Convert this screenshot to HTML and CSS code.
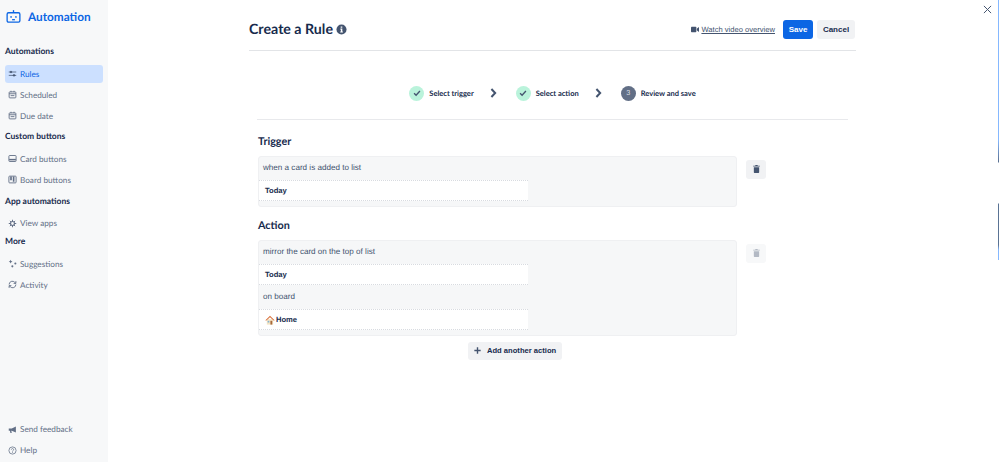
FILE: index.html
```html
<!DOCTYPE html>
<html lang="en">
<head>
    <meta charset="UTF-8">
    <meta name="viewport" content="width=device-width, initial-scale=1.0">
    <title>Create a Rule - Automation</title>
    <link rel="stylesheet" href="styles.css">
</head>
<body>
    <aside class="sidebar">
        <div class="brand">
            <svg class="brand-icon" viewBox="0 0 16 16" fill="none" stroke="#0c66e4" stroke-width="1.4"><rect x="1.2" y="4" width="13.6" height="10" rx="1.5"/><path d="M8 4V1.2"/><circle cx="5.4" cy="8.4" r=".9" fill="#0c66e4" stroke="none"/><circle cx="10.6" cy="8.4" r=".9" fill="#0c66e4" stroke="none"/><path d="M6.5 11.4h3"/></svg>
            <span>Automation</span>
        </div>

        <h2 class="nav-title first">Automations</h2>
        <a class="nav-item active" href="#">
            <svg viewBox="0 0 12 12" fill="none" stroke="currentColor" stroke-width="1"><path d="M1 4h10M1 8.500h10"/><circle cx="4" cy="4" r="1.100" fill="currentColor"/><circle cx="8" cy="8.500" r="1.100" fill="currentColor"/></svg>
            Rules
        </a>
        <a class="nav-item" href="#">
            <svg viewBox="0 0 12 12" fill="none" stroke="currentColor" stroke-width="1.2"><rect x="1.5" y="2.5" width="9" height="8" rx="1"/><path d="M1.5 5h9M4 1v2M8 1v2M3.500 7.500h5"/></svg>
            Scheduled
        </a>
        <a class="nav-item" href="#">
            <svg viewBox="0 0 12 12" fill="none" stroke="currentColor" stroke-width="1.2"><rect x="1.5" y="2.5" width="9" height="8" rx="1"/><path d="M1.5 5h9M4 1v2M8 1v2M3.500 7.500h5"/></svg>
            Due date
        </a>

        <h2 class="nav-title">Custom buttons</h2>
        <a class="nav-item" href="#">
            <svg viewBox="0 0 12 12" fill="none" stroke="currentColor" stroke-width="1.2"><rect x="1.2" y="2" width="9.6" height="8" rx="1"/><path d="M1.5 7.500h9" stroke-width="2"/></svg>
            Card buttons
        </a>
        <a class="nav-item" href="#">
            <svg viewBox="0 0 12 12" fill="none" stroke="currentColor" stroke-width="1.2"><rect x="1.2" y="1.5" width="9.6" height="9" rx="1"/><path d="M4 2v5M7.500 2v7" stroke-width="2.2"/></svg>
            Board buttons
        </a>

        <h2 class="nav-title">App automations</h2>
        <a class="nav-item" href="#">
            <svg viewBox="0 0 12 12" fill="none" stroke="currentColor"><circle cx="6" cy="6" r="2.600" stroke-width="1.5"/><path d="M6 1v2M6 9v2M1 6h2M9 6h2M2.500 2.500l1.400 1.400M8.100 8.100l1.400 1.400M2.500 9.500l1.400-1.400M8.100 3.900l1.400-1.400" stroke-width="1.3"/></svg>
            View apps
        </a>

        <h2 class="nav-title tight">More</h2>
        <a class="nav-item" href="#">
            <svg viewBox="0 0 12 12" fill="currentColor"><path d="M3.500 1l.8 1.700 1.700.8-1.700.8-.8 1.700-.8-1.700L1 3.500l1.700-.8z"/><circle cx="9.800" cy="6" r="1.400"/><circle cx="5.800" cy="9.800" r="1.400"/></svg>
            Suggestions
        </a>
        <a class="nav-item" href="#">
            <svg viewBox="0 0 12 12" fill="none" stroke="currentColor" stroke-width="1.2"><path d="M1.500 6a4.300 4.300 0 0 1 7.600-2.800L10.500 4.500M10.500 1.500v3h-3M10.500 6a4.300 4.300 0 0 1-7.600 2.800L1.500 7.500M1.500 10.500v-3h3"/></svg>
            Activity
        </a>

        <div class="sidebar-bottom">
            <a class="nav-item" href="#">
                <svg viewBox="0 0 12 12" fill="currentColor"><path d="M1 4.500h4L10.500 2v8L5 7.500H4.400L5 10.500H3.200L2.600 7.500H1z"/></svg>
                Send feedback
            </a>
            <a class="nav-item" href="#">
                <svg viewBox="0 0 12 12" fill="none" stroke="currentColor" stroke-width="1"><circle cx="6" cy="6" r="4.800"/><path d="M4.500 4.800a1.500 1.500 0 1 1 2.300 1.300c-.5.300-.8.600-.8 1.200M6 8.200v1"/></svg>
                Help
            </a>
        </div>
    </aside>

    <main class="main">
        <header class="page-header">
            <h1>Create a Rule</h1>
            <svg class="info-icon" viewBox="0 0 12 12"><circle cx="6" cy="6" r="5.500" fill="#44546f"/><path d="M5.100 2.600h1.800v1.500H5.100zM4.800 5h2.100v3.100h.6v1.200H4.600V8.100h.7V6.200h-.5z" fill="#fff"/></svg>
            <a class="video-link" href="#">
                <svg viewBox="0 0 12 10" fill="#44546f"><rect x="0" y="1" width="8" height="8" rx="1"/><path d="M8.600 4l3.400-2.600v7.200L8.600 6z"/></svg>
                <span>Watch video overview</span>
            </a>
            <button class="btn btn-primary">Save</button>
            <button class="btn btn-cancel">Cancel</button>
        </header>

        <div class="content">
            <div class="stepper">
                <div class="step">
                    <span class="step-dot done"><svg viewBox="0 0 12 12" fill="none" stroke="#44546f" stroke-width="1.6"><path d="M2.500 6.200l2.400 2.400 4.600-5"/></svg></span>
                    Select trigger
                </div>
                <svg class="step-arrow" viewBox="0 0 8 12" fill="none" stroke="#44546f" stroke-width="2.4"><path d="M1.500 1.200L6 6l-4.500 4.800"/></svg>
                <div class="step">
                    <span class="step-dot done"><svg viewBox="0 0 12 12" fill="none" stroke="#44546f" stroke-width="1.6"><path d="M2.500 6.200l2.400 2.400 4.600-5"/></svg></span>
                    Select action
                </div>
                <svg class="step-arrow" viewBox="0 0 8 12" fill="none" stroke="#44546f" stroke-width="2.4"><path d="M1.500 1.200L6 6l-4.500 4.800"/></svg>
                <div class="step">
                    <span class="step-dot current">3</span>
                    Review and save
                </div>
            </div>

            <section class="rule-section first">
                <h3>Trigger</h3>
                <div class="rule-row">
                    <div class="rule-box">
                        <p class="rule-text">when a card is added to list</p>
                        <div class="rule-value">Today</div>
                    </div>
                    <button class="trash-btn">
                        <svg viewBox="0 0 10 12" fill="#44546f"><path d="M3.500 0h3l.5 1H10v1.300H0V1h3zM1 3.200h8V11a1 1 0 0 1-1 1H2a1 1 0 0 1-1-1z"/></svg>
                    </button>
                </div>
            </section>

            <section class="rule-section">
                <h3>Action</h3>
                <div class="rule-row">
                    <div class="rule-box">
                        <p class="rule-text">mirror the card on the top of list</p>
                        <div class="rule-value">Today</div>
                        <p class="rule-text">on board</p>
                        <div class="rule-value">
                            <svg class="house" viewBox="0 0 12 12"><rect x="2.200" y="5" width="7.600" height="6.500" fill="#f3e3c3"/><path d="M.5 6.200L6 1l5.500 5.200-.8.700L6 2.600 1.300 6.900z" fill="#d9703c"/><rect x="6.500" y="7" width="2.200" height="4.500" fill="#a86a3d"/><rect x="3.200" y="7" width="2" height="2" fill="#7fb4d8"/></svg>
                            Home
                        </div>
                    </div>
                    <button class="trash-btn disabled">
                        <svg viewBox="0 0 10 12" fill="#b3b9c4"><path d="M3.500 0h3l.5 1H10v1.300H0V1h3zM1 3.200h8V11a1 1 0 0 1-1 1H2a1 1 0 0 1-1-1z"/></svg>
                    </button>
                </div>
            </section>

            <div class="add-row">
                <button class="btn-add">
                    <svg viewBox="0 0 10 10" fill="none" stroke="#44546f" stroke-width="2"><path d="M5 .5v9M.5 5h9"/></svg>
                    Add another action
                </button>
            </div>
        </div>
    </main>

    <button class="close-btn">
        <svg viewBox="0 0 10 10" fill="none" stroke="#44546f" stroke-width="1.1"><path d="M1 1l8 8M9 1l-8 8"/></svg>
    </button>
    <div class="edge-bar"></div>
</body>
</html>
```

FILE: styles.css
```css
html, body {
    height: 100%;
}

body {
    margin: 0;
    display: flex;
    overflow: hidden;
    background-color: #fff;
    color: #172b4d;
    font-family: 'Liberation Sans', Arial, sans-serif;
    text-rendering: geometricPrecision;
}

/* sidebar */
.sidebar {
    width: 108px;
    flex-shrink: 0;
    box-sizing: border-box;
    display: flex;
    flex-direction: column;
    padding: 0 5px;
    background-color: #f7f8f9;
    font-family: 'Lato', sans-serif;
}

.brand {
    display: flex;
    align-items: center;
    gap: 7px;
    height: 33px;
    padding-left: 1px;
    color: #0c66e4;
    font-size: 11.8px;
    font-weight: 700;
}

.brand-icon {
    width: 15px;
    height: 15px;
}

.nav-title {
    margin: 1.8px 0 6.5px;
    height: 14px;
    line-height: 14px;
    font-size: 8.5px;
    font-weight: 700;
    color: #172b4d;
}

.nav-title.first {
    margin-top: 11px;
}

.nav-title.tight {
    margin-top: -1px;
}

.nav-item {
    display: flex;
    align-items: center;
    gap: 3px;
    height: 18px;
    padding-left: 3px;
    margin-bottom: 3px;
    border-radius: 3px;
    color: #626f86;
    font-size: 8.2px;
    text-decoration: none;
}

.nav-item svg {
    width: 9px;
    height: 9px;
    flex-shrink: 0;
}

.nav-item.active {
    background-color: #cce0ff;
    color: #0c66e4;
}

.nav-item.active svg {
    color: #44546f;
}

.sidebar-bottom {
    margin-top: auto;
}

/* main */
.main {
    flex: 1;
    padding: 0 143px 0 141px;
}

.page-header {
    display: flex;
    align-items: center;
    height: 42px;
    padding-top: 8px;
    border-bottom: 1px solid #e2e4e7;
}

.page-header h1 {
    margin: 0;
    font-family: 'Lato', sans-serif;
    font-size: 14.2px;
    font-weight: 700;
    color: #172b4d;
}

.info-icon {
    width: 11px;
    height: 11px;
    margin-left: 3px;
}

.video-link {
    display: flex;
    align-items: center;
    gap: 2px;
    margin-left: auto;
    margin-right: 8px;
    color: #44546f;
    font-size: 7.6px;
}

.video-link svg {
    width: 8px;
    height: 7px;
}

.btn {
    height: 19px;
    padding: 0;
    border: 0;
    border-radius: 3px;
    font-family: 'Liberation Sans', Arial, sans-serif;
    font-size: 8px;
    font-weight: 700;
}

.btn-primary {
    width: 30px;
    background-color: #0c66e4;
    color: #fff;
}

.btn-cancel {
    width: 38px;
    margin-left: 4px;
    margin-right: 1px;
    background-color: #f1f2f4;
    color: #172b4d;
}

.content {
    padding: 0 8px;
}

.stepper {
    display: flex;
    align-items: center;
    justify-content: center;
    height: 52px;
    padding-top: 16px;
    border-bottom: 1px solid #e8e9ec;
    font-family: 'Lato', sans-serif;
    font-size: 7.5px;
    font-weight: 700;
}

.step {
    display: flex;
    align-items: center;
    gap: 5px;
}

.step-dot {
    display: flex;
    align-items: center;
    justify-content: center;
    width: 15px;
    height: 15px;
    border-radius: 50%;
    font-size: 7px;
    font-weight: 400;
}

.step-dot svg {
    width: 10px;
    height: 10px;
}

.step-dot.done {
    background-color: #baf3db;
}

.step-dot.current {
    background-color: #626f86;
    color: #dcdfe4;
}

.step-arrow {
    width: 7px;
    height: 10px;
    margin: 0 19px 0 16px;
}

.rule-section {
    margin-top: 10px;
    padding-left: 1px;
}

.rule-section.first {
    margin-top: 13px;
}

.rule-section h3 {
    margin: 0 0 7px;
    height: 16px;
    line-height: 18px;
    font-family: 'Lato', sans-serif;
    font-size: 10.8px;
    font-weight: 700;
}

.rule-row {
    display: flex;
    align-items: flex-start;
    gap: 9px;
}

.rule-box {
    width: 479px;
    box-sizing: border-box;
    padding: 0 0 5px;
    border: 1px solid #eff0f2;
    border-radius: 3px;
    background-color: #f6f7f8;
}

.rule-text {
    margin: 0;
    height: 23px;
    line-height: 21px;
    padding-left: 4px;
    font-size: 8.1px;
    color: #42526e;
}

.rule-value + .rule-text {
    height: 24px;
    line-height: 23px;
}

.rule-value {
    display: flex;
    align-items: center;
    gap: 1px;
    box-sizing: border-box;
    width: 269px;
    height: 21px;
    padding-left: 6px;
    border-top: 1px dotted #d8dbe0;
    border-bottom: 1px dotted #d8dbe0;
    background-color: #fff;
    font-size: 7.6px;
    font-weight: 700;
    color: #172b4d;
}

.house {
    width: 10px;
    height: 10px;
}

.trash-btn {
    display: flex;
    align-items: center;
    justify-content: center;
    width: 20px;
    height: 19px;
    margin-top: 3.5px;
    padding: 0;
    border: 0;
    border-radius: 3px;
    background-color: #f1f2f4;
}

.trash-btn.disabled {
    background-color: #f7f8f9;
}

.trash-btn svg {
    width: 7px;
    height: 8px;
}

.add-row {
    display: flex;
    margin-top: 5.5px;
    padding-left: 211px;
}

.btn-add {
    display: flex;
    align-items: center;
    gap: 6px;
    box-sizing: border-box;
    width: 94px;
    height: 18px;
    padding: 0 0 0 6px;
    border: 0;
    border-radius: 3px;
    background-color: #f1f2f4;
    color: #172b4d;
    font-family: 'Liberation Sans', Arial, sans-serif;
    font-size: 7.6px;
    font-weight: 700;
    white-space: nowrap;
}

.btn-add svg {
    width: 7px;
    height: 7px;
}

/* overlay bits */
.close-btn {
    position: absolute;
    top: 4.500px;
    right: 7.500px;
    width: 9px;
    height: 9px;
    padding: 0;
    border: 0;
    background: none;
}

.close-btn svg {
    display: block;
    width: 9px;
    height: 9px;
}

.edge-bar {
    position: absolute;
    top: 0;
    right: 0;
    width: 1px;
    height: 260px;
    background: linear-gradient(#85b8ff 0, #85b8ff 140px, #5a6f8f 162px, #ffffff 163px, #ffffff 203px, #5a7394 204px, #5a7394 245px, #85b8ff 250px, #85b8ff 260px);
}
```
